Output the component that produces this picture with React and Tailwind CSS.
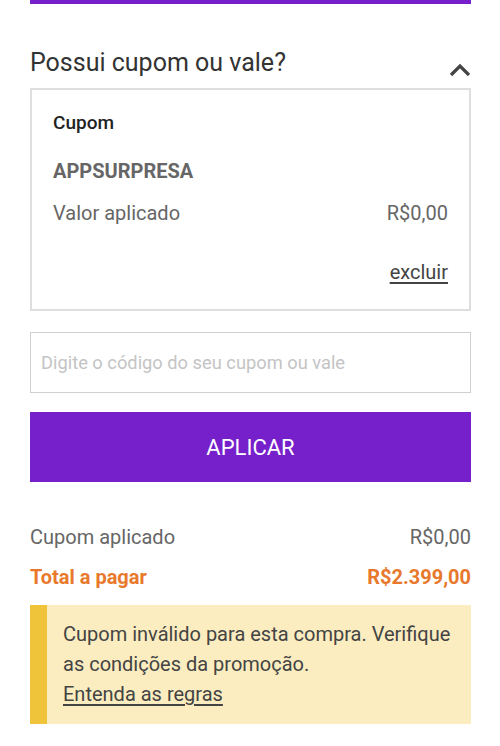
export default function App() {
  return (
    <div className="w-[500px] h-[746px] bg-white overflow-hidden" style={{ fontFamily: "Roboto, 'Liberation Sans', sans-serif" }}>
      <div className="ml-[30px] w-[441px]">
        <div className="h-[4px] bg-[#7620cc]" />
        <div className="flex items-end justify-between mt-[42px]">
          <h2 className="text-[25px] leading-[34px] text-[#333]">Possui cupom ou vale?</h2>
          <svg width="22" height="14" viewBox="0 0 22 14" className="mb-[3px]">
            <path d="M2 12 L11 3 L20 12" fill="none" stroke="#444" strokeWidth="3.2" />
          </svg>
        </div>
        <div className="mt-[8px] h-[223px] border-[2px] border-[#dedede] px-[21px] pt-[19px]">
          <div className="text-[19px] leading-[28px] font-medium text-[#222]">Cupom</div>
          <div className="mt-[20px] text-[20px] leading-[28px] font-bold text-[#666]">APPSURPRESA</div>
          <div className="mt-[14px] flex justify-between text-[20px] leading-[28px] text-[#666]">
            <span>Valor aplicado</span>
            <span>R$0,00</span>
          </div>
          <div className="mt-[31px] flex justify-end text-[20px] leading-[28px] text-[#444]">
            <span className="underline underline-offset-[3px]">excluir</span>
          </div>
        </div>
        <input
          className="mt-[21px] block w-full h-[61px] border border-[#cfcfcf] px-[10px] text-[18.3px] text-[#333] placeholder:text-[#c4c4c4] outline-none"
          placeholder="Digite o código do seu cupom ou vale"
        />
        <button className="mt-[19px] w-full h-[70px] bg-[#7620cc] text-white text-[22px] flex items-center justify-center">
          APLICAR
        </button>
        <div className="mt-[41px] flex justify-between text-[20px] leading-[28px] text-[#666]">
          <span>Cupom aplicado</span>
          <span>R$0,00</span>
        </div>
        <div className="mt-[12px] flex justify-between text-[20px] leading-[28px] font-bold text-[#e8792c]">
          <span>Total a pagar</span>
          <span>R$2.399,00</span>
        </div>
        <div className="mt-[14px] flex bg-[#fbedc0] h-[119px]">
          <div className="w-[17px] shrink-0 bg-[#f0c43a]" />
          <div className="pl-[16px] pr-[10px] pt-[14px] text-[20px] leading-[30px] text-[#444]">
            <div>Cupom inválido para esta compra. Verifique as condições da promoção.</div>
            <div className="underline underline-offset-[3px]">Entenda as regras</div>
          </div>
        </div>
      </div>
    </div>
  );
}
